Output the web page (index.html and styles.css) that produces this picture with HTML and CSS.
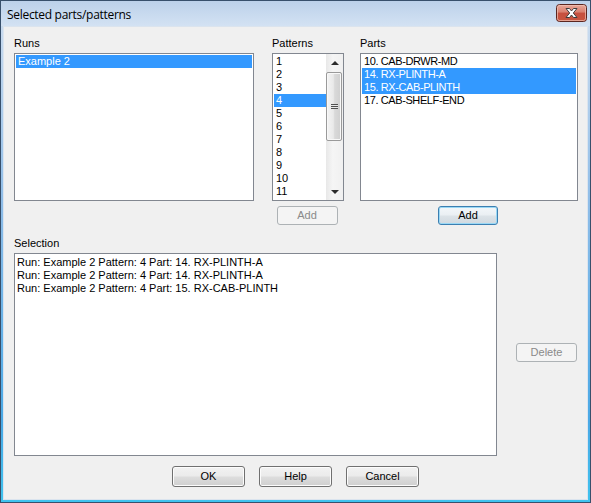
FILE: index.html
```html
<!DOCTYPE html>
<html>
<head>
<meta charset="utf-8">
<title>Selected parts/patterns</title>
<link rel="stylesheet" href="styles.css">
</head>
<body>
<div class="window">
  <div class="titlebar">
    <span class="title">Selected parts/patterns</span>
    <div class="close">
      <svg width="31" height="18" viewBox="0 0 31 18">
        <defs>
          <linearGradient id="cg" x1="0" y1="0" x2="0" y2="1">
            <stop offset="0" stop-color="#e9a99b"/>
            <stop offset="0.45" stop-color="#d9806f"/>
            <stop offset="0.5" stop-color="#c6503f"/>
            <stop offset="1" stop-color="#c8553f"/>
          </linearGradient>
        </defs>
        <rect x="0.5" y="0.5" width="30" height="17" rx="3" ry="3" fill="url(#cg)" stroke="#5b2620"/>
        <rect x="1.5" y="1.5" width="28" height="15" rx="2" ry="2" fill="none" stroke="#f1c3b6" stroke-opacity="0.7"/>
        <path d="M10 4.5 L13.5 4.5 L15.5 7 L17.5 4.5 L21 4.5 L17.3 9 L21 13.5 L17.5 13.5 L15.5 11 L13.5 13.5 L10 13.5 L13.7 9 Z" fill="#ffffff" stroke="#3d3d3d" stroke-width="1" stroke-linejoin="round"/>
      </svg>
    </div>
  </div>
  <div class="client">
    <div class="top">
      <div class="col runs">
        <div class="label">Runs</div>
        <div class="list">
          <div class="item sel">Example 2</div>
        </div>
      </div>
      <div class="col patterns">
        <div class="label">Patterns</div>
        <div class="list scroll">
          <div class="items">
            <div class="item">1</div>
            <div class="item">2</div>
            <div class="item">3</div>
            <div class="item sel">4</div>
            <div class="item">5</div>
            <div class="item">6</div>
            <div class="item">7</div>
            <div class="item">8</div>
            <div class="item">9</div>
            <div class="item">10</div>
            <div class="item">11</div>
          </div>
          <div class="vscroll">
            <div class="arrow up"><span class="tri-up"></span></div>
            <div class="track">
              <div class="thumb"><span class="grip"></span></div>
            </div>
            <div class="arrow down"><span class="tri-down"></span></div>
          </div>
        </div>
        <button class="btn disabled" disabled>Add</button>
      </div>
      <div class="col parts">
        <div class="label">Parts</div>
        <div class="list caps">
          <div class="item">10. CAB-DRWR-MD</div>
          <div class="item sel">14. RX-PLINTH-A</div>
          <div class="item sel">15. RX-CAB-PLINTH</div>
          <div class="item">17. CAB-SHELF-END</div>
        </div>
        <button class="btn default">Add</button>
      </div>
    </div>
    <div class="label sel-label">Selection</div>
    <div class="sel-row">
      <div class="selbox">
        <div class="line">Run: Example 2 Pattern: 4 Part: 14. RX-PLINTH-A</div>
        <div class="line">Run: Example 2 Pattern: 4 Part: 14. RX-PLINTH-A</div>
        <div class="line">Run: Example 2 Pattern: 4 Part: 15. RX-CAB-PLINTH</div>
      </div>
      <button class="btn disabled delete" disabled>Delete</button>
    </div>
    <div class="bottom">
      <button class="btn wide">OK</button>
      <button class="btn wide">Help</button>
      <button class="btn wide">Cancel</button>
    </div>
  </div>
</div>
</body>
</html>
```

FILE: styles.css
```css
* { box-sizing: border-box; }
html, body { margin: 0; padding: 0; }
body {
  width: 591px;
  height: 503px;
  overflow: hidden;
  font-family: "Liberation Sans", Arial, sans-serif;
  font-size: 11px;
  color: #000;
}
.window {
  width: 591px;
  height: 503px;
  border: 1px solid #38506c;
  background: linear-gradient(to bottom, #b9cfea 0px, #c9dbef 25px, #8fbde8 200px, #4aa9e6 420px, #3fc3ee 503px);
  padding: 0 2px 2px 2px;
  display: flex;
  flex-direction: column;
}
.titlebar {
  height: 25px;
  flex: none;
  display: flex;
  align-items: flex-start;
  justify-content: space-between;
  background: linear-gradient(to bottom, #bcd1ea, #d3e2f3);
  margin: 0 -2px;
  padding: 0 3px 0 6px;
}
.title {
  font-family: "Open Sans", "Noto Sans", sans-serif;
  font-size: 12px;
  line-height: 16px;
  margin-top: 6px;
  letter-spacing: -0.3px;
  color: #000;
}
.close {
  margin-top: 3px;
  width: 31px;
  height: 18px;
}
.close svg { display: block; }
.client {
  flex: 1;
  background: #f0f0f0;
  border: 1px solid #dbe4ee;
  padding: 10px 0 0 10px;
}
.top {
  display: flex;
  align-items: flex-start;
}
.col {
  display: flex;
  flex-direction: column;
  align-items: center;
}
.runs { width: 240px; }
.patterns { width: 72px; margin-left: 18px; }
.parts { width: 218px; margin-left: 16px; }
.label {
  line-height: 13px;
  height: 13px;
  margin-bottom: 3px;
  align-self: flex-start;
}
.list {
  width: 100%;
  height: 148px;
  background: #fff;
  border: 1px solid #828790;
  padding: 1px;
}
.item {
  height: 13px;
  line-height: 13px;
  padding-left: 2px;
  white-space: nowrap;
}
.list.caps .item {
  letter-spacing: -0.4px;
}
.item.sel {
  background: #3399ff;
  color: #fff;
}
.list.scroll {
  display: flex;
  padding: 1px 0 0 1px;
}
.list.scroll .items {
  flex: 1;
  min-width: 0;
}
.vscroll {
  width: 17px;
  flex: none;
  display: flex;
  flex-direction: column;
  margin-top: -1px;
  background: linear-gradient(to right, #e8e8e8, #f5f5f5 40%, #f0f0f0);
}
.arrow {
  height: 17px;
  flex: none;
  display: flex;
  align-items: center;
  justify-content: center;
}
.tri-up {
  width: 0; height: 0;
  border-left: 4px solid transparent;
  border-right: 4px solid transparent;
  border-bottom: 4px solid #2b2b2b;
}
.tri-down {
  width: 0; height: 0;
  border-left: 4px solid transparent;
  border-right: 4px solid transparent;
  border-top: 4px solid #2b2b2b;
}
.track {
  flex: 1;
  padding-top: 1px;
}
.thumb {
  width: 16px;
  height: 69px;
  border: 1px solid #9a9a9a;
  border-radius: 2px;
  background: linear-gradient(to right, #f4f4f4, #e9e9e9 45%, #d9d9d9 55%, #cfcfcf);
  box-shadow: inset 0 0 0 1px #f8f8f8;
  display: flex;
  align-items: center;
  justify-content: center;
}
.grip {
  width: 7px;
  height: 5px;
  background: repeating-linear-gradient(to bottom, #505050 0, #505050 1px, #e8e8e8 1px, #e8e8e8 2px);
}
.btn {
  font-family: "Liberation Sans", Arial, sans-serif;
  font-size: 11px;
  color: #000;
  height: 19px;
  width: 61px;
  padding: 0;
  margin: 5px 0 0 0;
  border: 1px solid #707070;
  border-radius: 3px;
  background: linear-gradient(to bottom, #f2f2f2 0%, #ebebeb 48%, #dddddd 52%, #cfcfcf 100%);
  box-shadow: inset 0 0 0 1px #fcfcfc;
  line-height: 15px;
}
.btn.disabled {
  color: #8a8a8a;
  border-color: #adb2b5;
  background: #f4f4f4;
  box-shadow: none;
}
.btn.default {
  border-color: #3c7fb1;
  background: linear-gradient(to bottom, #f3f7fa 0%, #eaeff3 48%, #dce3e8 52%, #d0d9e0 100%);
  box-shadow: inset 0 0 0 1px #9ad8f5;
  width: 60px;
  margin-left: -2px;
}
.patterns .btn { margin-left: -2px; }
.sel-label {
  margin-top: 12px;
}
.sel-row {
  display: flex;
  align-items: flex-start;
}
.selbox {
  width: 483px;
  height: 203px;
  background: #fff;
  border: 1px solid #828790;
  padding: 2px 0 0 2px;
}
.line {
  height: 13px;
  line-height: 13px;
  white-space: nowrap;
}
.btn.delete {
  margin: 90px 0 0 19px;
}
.bottom {
  display: flex;
  justify-content: center;
  gap: 14px;
  margin-top: 10px;
  padding-right: 10px;
}
.btn.wide {
  width: 73px;
  height: 21px;
  margin: 0;
}
```
